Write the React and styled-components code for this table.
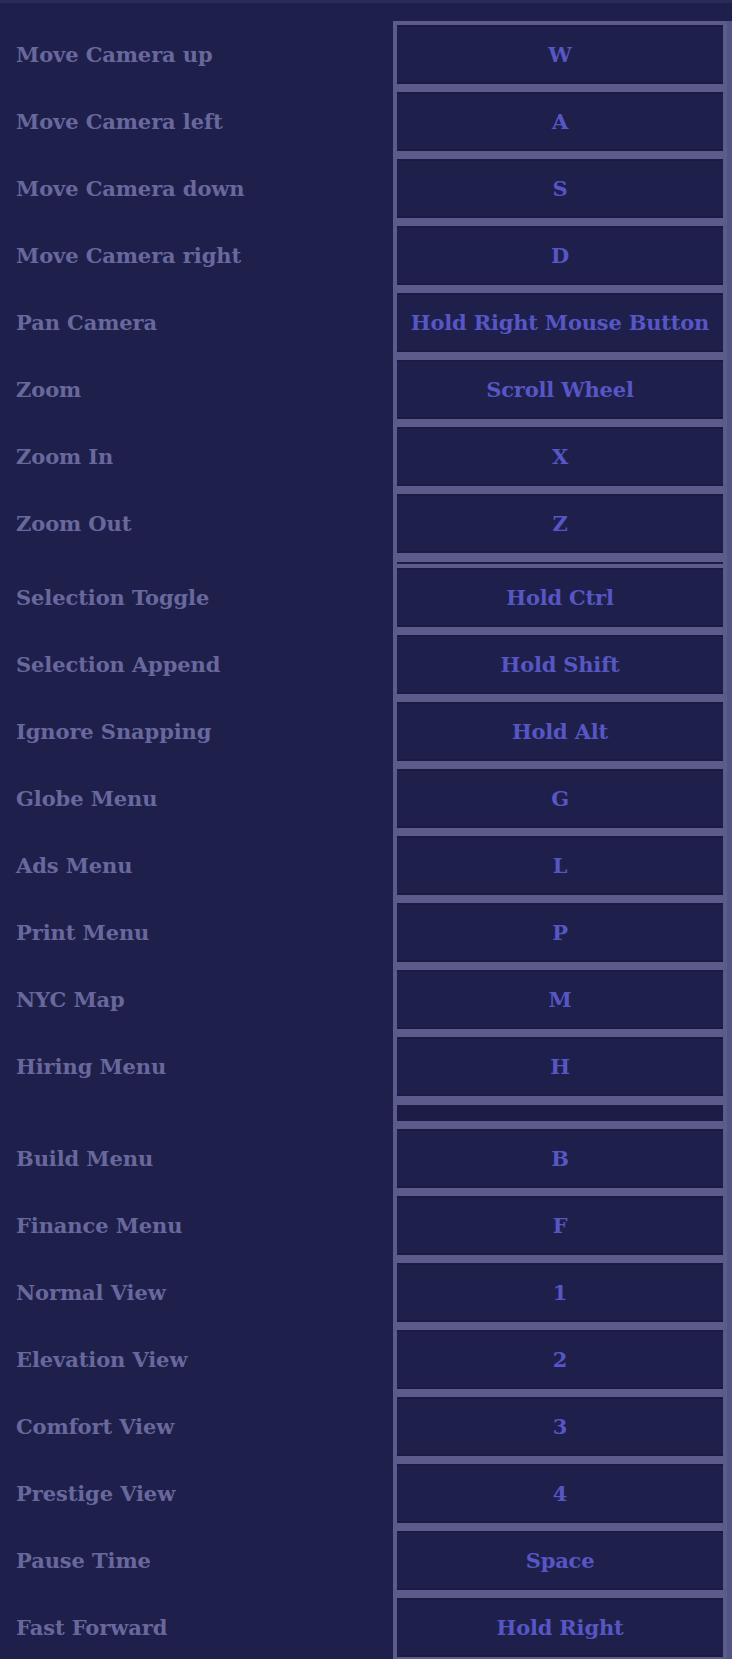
import React from "react";
import styled, { createGlobalStyle } from "styled-components";

const GlobalStyle = createGlobalStyle`
  html, body {
    margin: 0;
    padding: 0;
    background: #1f1f4b;
  }
  body {
    font-family: "DejaVu Serif", "Liberation Serif", serif;
  }
`;

const sections = [
  [
    ["Move Camera up", "W"],
    ["Move Camera left", "A"],
    ["Move Camera down", "S"],
    ["Move Camera right", "D"],
    ["Pan Camera", "Hold Right Mouse Button"],
    ["Zoom", "Scroll Wheel"],
    ["Zoom In", "X"],
    ["Zoom Out", "Z"],
  ],
  [
    ["Selection Toggle", "Hold Ctrl"],
    ["Selection Append", "Hold Shift"],
    ["Ignore Snapping", "Hold Alt"],
    ["Globe Menu", "G"],
    ["Ads Menu", "L"],
    ["Print Menu", "P"],
    ["NYC Map", "M"],
    ["Hiring Menu", "H"],
  ],
  [
    ["Build Menu", "B"],
    ["Finance Menu", "F"],
    ["Normal View", "1"],
    ["Elevation View", "2"],
    ["Comfort View", "3"],
    ["Prestige View", "4"],
    ["Pause Time", "Space"],
    ["Fast Forward", "Hold Right"],
  ],
];

const Page = styled.div`
  width: 732px;
  height: 1659px;
  overflow: hidden;
  box-sizing: border-box;
  background: #1f1f4b;
  border-top: 3px solid #2b2b57;
  padding-top: 18px;
`;

const Row = styled.div`
  display: grid;
  grid-template-columns: 393px 334px;
  align-items: center;
`;

const Label = styled.div`
  padding-left: 16px;
  font-size: 21px;
  font-weight: bold;
  color: #68689d;
  letter-spacing: -0.1px;
`;

const Key = styled.div`
  height: 67px;
  box-sizing: border-box;
  border: 4px solid #5c5c8c;
  background: #1f1f4b;
  box-shadow: inset 0 2px 0 #1a1a42, inset 0 -2px 0 #1a1a42, 5px 0 0 #4f5585;
  display: flex;
  align-items: center;
  justify-content: center;
  font-size: 21px;
  font-weight: bold;
  color: #5656c4;
  letter-spacing: -0.2px;
`;

const Spacer = styled.div`
  grid-column: 2;
  box-sizing: border-box;
  border: 4px solid #5c5c8c;
  border-top-width: 5px;
  border-bottom-width: ${(p) => (p.$tall ? "4px" : "0")};
  height: ${(p) => (p.$tall ? "25px" : "7px")};
  box-shadow: 5px 0 0 #4f5585;
  background: #1c1c46;
`;

export default function App() {
  return (
    <>
      <GlobalStyle />
      <Page>
        {sections.map((rows, i) => (
          <React.Fragment key={i}>
            {i > 0 && (
              <Row>
                <Spacer $tall={i === 2} />
              </Row>
            )}
            {rows.map(([action, key]) => (
              <Row key={action}>
                <Label>{action}</Label>
                <Key>{key}</Key>
              </Row>
            ))}
          </React.Fragment>
        ))}
      </Page>
    </>
  );
}
